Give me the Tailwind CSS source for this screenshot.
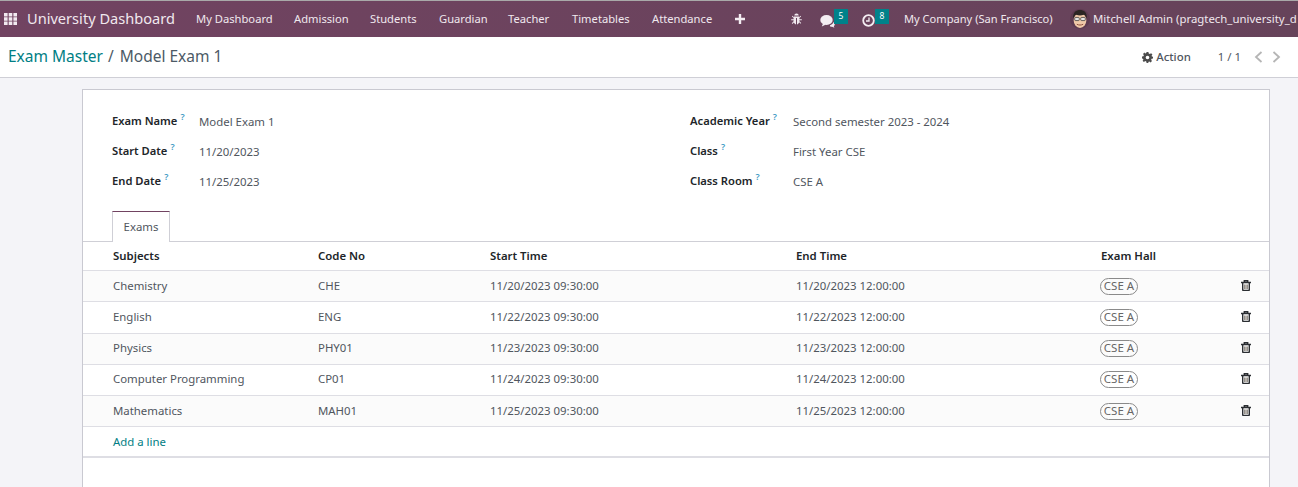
<!DOCTYPE html>
<html lang="en">
<head>
    <meta charset="UTF-8">
    <title>Exam Master / Model Exam 1</title>
    <script src="https://cdn.jsdelivr.net/npm/@tailwindcss/browser@4"></script>
</head>
<body class="h-[487px] overflow-hidden bg-[#f4f4f8] font-['Noto_Sans','Open_Sans',sans-serif] text-[11.4px] text-[#50565e]">
    <!-- Top nav -->
    <div class="h-[1px] bg-[#a9a9a9]"></div>
    <nav class="flex h-[36px] items-center overflow-hidden whitespace-nowrap bg-gradient-to-r from-[#714361] to-[#66435a] text-[11.2px] text-[#f0e8ee]">
        <svg class="ml-[4px] h-[12px] w-[13px] shrink-0 fill-[#f2eaf0]" viewBox="0 0 13 12">
            <path d="M0 0h3.6v3.4H0zM4.7 0h3.6v3.4H4.7zM9.4 0H13v3.4H9.4zM0 4.3h3.6v3.4H0zM4.7 4.3h3.6v3.4H4.7zM9.4 4.3H13v3.4H9.4zM0 8.6h3.6V12H0zM4.7 8.6h3.6V12H4.7zM9.4 8.6H13V12H9.4z"/>
        </svg>
        <span class="ml-[10px] w-[147px] text-[14.6px]">University Dashboard</span>
        <span class="ml-[22px] w-[76px]">My Dashboard</span>
        <span class="ml-[22px] w-[55px]">Admission</span>
        <span class="ml-[21px] w-[48px]">Students</span>
        <span class="ml-[21px] w-[48px]">Guardian</span>
        <span class="ml-[21px] w-[42px]">Teacher</span>
        <span class="ml-[22px] w-[59px]">Timetables</span>
        <span class="ml-[21px] w-[62px]">Attendance</span>
        <svg class="ml-[21px] h-[10px] w-[10px] shrink-0 fill-[#f4edf2]" viewBox="0 0 10 10"><path d="M3.8 0h2.4v3.8H10v2.4H6.2V10H3.8V6.2H0V3.8h3.8z"/></svg>

        <!-- bug -->
        <svg class="ml-[46px] h-[12px] w-[11px] shrink-0 fill-[#f0e8ee]" viewBox="0 0 11 12">
            <path d="M3.3 2.6a2.2 2.2 0 0 1 4.4 0zM3 3.4h5v.8l1.5-1.4.6.6L8.4 5v1.3h2.4v1H8.4v1l1.8 1.8-.6.6-1.4-1.4C7.6 10.600 6.800 11.400 6 11.500V5H5v6.500c-.8-.1-1.600-.9-2.200-2L1.400 10.900l-.6-.6L2.600 8.300v-1H.2v-1h2.400V5L.9 3.400l.6-.6L3 4.200z"/>
        </svg>
        <!-- comments + badge -->
        <div class="relative ml-[18px] h-[14px] w-[14px] shrink-0 translate-y-[2px]">
            <svg class="h-[14px] w-[15px] fill-[#f4edf2]" viewBox="0 0 15 14">
                <ellipse cx="6.500" cy="6" rx="6.200" ry="5"/>
                <path d="M3 9.500 1.800 12.500 6 10.500z"/>
                <path d="M10 11.200c1.500-.3 3-1.600 3.500-3.200.8.700 1.300 1.500 1.300 2.300 0 .9-.5 1.500-1 2l.6 1.500-2.300-1c-.9 0-1.600-.2-2.100-.6z"/>
            </svg>
            <span class="absolute left-[14px] top-[-5px] flex h-[15px] w-[14px] items-center justify-center bg-[#00828a] text-[8.500px] text-white">5</span>
        </div>
        <!-- clock + badge -->
        <div class="relative ml-[28px] h-[13px] w-[13px] shrink-0 translate-y-[1px]">
            <svg class="h-[13px] w-[13px]" viewBox="0 0 13 13" fill="none" stroke="#f4edf2">
                <circle cx="6.500" cy="6.500" r="5.300" stroke-width="1.800"/>
                <path d="M7 3.500v3.500H4" stroke-width="1.300"/>
            </svg>
            <span class="absolute left-[13px] top-[-5px] flex h-[15px] w-[14px] items-center justify-center bg-[#00828a] text-[8.500px] text-white">8</span>
        </div>
        <span class="ml-[29px] w-[148px] text-[11.100px]">My Company (San Francisco)</span>
        <!-- avatar -->
        <svg class="ml-[18px] h-[20px] w-[20px] shrink-0" viewBox="0 0 19 19">
            <circle cx="9.500" cy="9.500" r="9.500" fill="#5d3a50"/>
            <ellipse cx="9.500" cy="11" rx="6" ry="7" fill="#f0c9a8"/>
            <path d="M3 9C2.500 3 6 1 9.500 1S16.500 3 16 9c-1-2-2-3.500-3-3.500-2 .8-5 .8-7 0C5 5.500 4 7 3 9z" fill="#2b2523"/>
            <rect x="4.500" y="8" width="4.300" height="3" rx=".8" fill="#e6e6e6" stroke="#333" stroke-width=".7"/>
            <rect x="10.200" y="8" width="4.300" height="3" rx=".8" fill="#e6e6e6" stroke="#333" stroke-width=".7"/>
            <path d="M6.500 14.500c2 1 4 1 6 0" stroke="#8a4a3a" stroke-width=".9" fill="none"/>
        </svg>
        <span class="ml-[3px] text-[11.400px]">Mitchell Admin (pragtech_university_d</span>
    </nav>

    <!-- Breadcrumb bar -->
    <div class="flex h-[41px] items-center border-b border-[#cfcfd6] bg-white">
        <span class="ml-[8px] text-[15.500px] text-[#017e84]">Exam Master</span>
        <span class="ml-[5px] text-[15.500px] text-[#4c5a66]">/</span>
        <span class="ml-[6px] text-[15.500px] text-[#4c5a66]">Model Exam 1</span>
        <svg class="ml-auto h-[11px] w-[11px] fill-[#4c4c4c]" viewBox="0 0 24 24">
            <path d="M10 0h4l.7 3.300 2.300 1 2.900-1.800 2.800 2.800-1.800 2.900 1 2.300L24 10v4l-3.100.7-1 2.300 1.800 2.900-2.800 2.800-2.900-1.800-2.300 1L14 24h-4l-.7-3.100-2.300-1-2.900 1.800-2.800-2.800L3.100 17l-1-2.300L0 14v-4l3.100-.7 1-2.300-1.800-2.900 2.800-2.800L7 3.100l2.300-1zM12 8a4 4 0 1 0 0 8 4 4 0 0 0 0-8z" fill-rule="evenodd"/>
        </svg>
        <span class="ml-[3px] font-medium">Action</span>
        <span class="ml-[27px]">1 / 1</span>
        <svg class="ml-[13px] h-[12px] w-[9px]" viewBox="0 0 9 12" fill="none" stroke="#b5b5b5" stroke-width="1.800"><path d="M7.500 1 2 6l5.500 5"/></svg>
        <svg class="ml-[9px] mr-[17px] h-[12px] w-[9px]" viewBox="0 0 9 12" fill="none" stroke="#b5b5b5" stroke-width="1.800"><path d="M1.500 1 7 6l-5.500 5"/></svg>
    </div>

    <!-- Form sheet -->
    <div class="mx-[82px] mt-[11px] h-[400px] w-[1188px] border border-[#c9c9d1] bg-white">
        <div class="grid grid-cols-[578px_1fr] pl-[29px] pt-[17px]">
            <div>
                <div class="flex h-[30px] items-center"><span class="w-[87px] -translate-y-px text-[11.200px] font-semibold text-[#212529]">Exam Name<sup class="ml-[3px] text-[9px] font-semibold text-[#3d9ac4]">?</sup></span><span>Model Exam 1</span></div>
                <div class="flex h-[30px] items-center"><span class="w-[87px] -translate-y-px text-[11.200px] font-semibold text-[#212529]">Start Date<sup class="ml-[3px] text-[9px] font-semibold text-[#3d9ac4]">?</sup></span><span>11/20/2023</span></div>
                <div class="flex h-[30px] items-center"><span class="w-[87px] -translate-y-px text-[11.200px] font-semibold text-[#212529]">End Date<sup class="ml-[3px] text-[9px] font-semibold text-[#3d9ac4]">?</sup></span><span>11/25/2023</span></div>
            </div>
            <div>
                <div class="flex h-[30px] items-center"><span class="w-[103px] -translate-y-px text-[11.200px] font-semibold text-[#212529]">Academic Year<sup class="ml-[3px] text-[9px] font-semibold text-[#3d9ac4]">?</sup></span><span>Second semester 2023 - 2024</span></div>
                <div class="flex h-[30px] items-center"><span class="w-[103px] -translate-y-px text-[11.200px] font-semibold text-[#212529]">Class<sup class="ml-[3px] text-[9px] font-semibold text-[#3d9ac4]">?</sup></span><span>First Year CSE</span></div>
                <div class="flex h-[30px] items-center"><span class="w-[103px] -translate-y-px text-[11.200px] font-semibold text-[#212529]">Class Room<sup class="ml-[3px] text-[9px] font-semibold text-[#3d9ac4]">?</sup></span><span>CSE A</span></div>
            </div>
        </div>

        <!-- Tab -->
        <div class="mt-[14px] h-[31px] border-b border-[#cfcfd6] pl-[29px]">
            <div class="flex h-[31px] w-[58px] items-center justify-center border border-b-0 border-[#cfcfd6] border-t-[#714361] bg-white">Exams</div>
        </div>

        <!-- Lines -->
        <div class="grid h-[28px] grid-cols-[205px_172px_306px_305px_140px_1fr] items-center pl-[30px] font-semibold text-[#212529]">
            <span>Subjects</span><span>Code No</span><span>Start Time</span><span>End Time</span><span>Exam Hall</span><span></span>
        </div>

        <div class="grid h-[31px] grid-cols-[205px_172px_306px_305px_140px_1fr] items-center border-t border-[#dedee4] bg-[#fbfbfb] pl-[30px]">
            <span>Chemistry</span><span>CHE</span><span>11/20/2023 09:30:00</span><span>11/20/2023 12:00:00</span>
            <span class="flex h-[17px] w-[38px] -translate-x-px items-center justify-center rounded-full border border-[#8a8a8a] text-[11.500px] text-[#666]">CSE A</span>
            <svg class="h-[11px] w-[10px] -translate-y-px" viewBox="0 0 10 11" fill="none" stroke="#2b2e32" stroke-width="1.400"><path d="M0 2.500h10M3.300 2.500V.8h3.400v1.700"/><path d="M1.700 2.500v7.300a.7.7 0 0 0 .7.7h5.200a.7.7 0 0 0 .7-.7V2.500"/><path d="M3.900 4.500v4.500M6.100 4.500v4.500" stroke="#5f574c" stroke-width="1.100"/></svg>
        </div>
        <div class="grid h-[32px] grid-cols-[205px_172px_306px_305px_140px_1fr] items-center border-t border-[#dedee4] pb-px pl-[30px]">
            <span>English</span><span>ENG</span><span>11/22/2023 09:30:00</span><span>11/22/2023 12:00:00</span>
            <span class="flex h-[17px] w-[38px] -translate-x-px items-center justify-center rounded-full border border-[#8a8a8a] text-[11.500px] text-[#666]">CSE A</span>
            <svg class="h-[11px] w-[10px] -translate-y-px" viewBox="0 0 10 11" fill="none" stroke="#2b2e32" stroke-width="1.400"><path d="M0 2.500h10M3.300 2.500V.8h3.400v1.700"/><path d="M1.700 2.500v7.300a.7.7 0 0 0 .7.7h5.200a.7.7 0 0 0 .7-.7V2.500"/><path d="M3.900 4.500v4.500M6.100 4.500v4.500" stroke="#5f574c" stroke-width="1.100"/></svg>
        </div>
        <div class="grid h-[31px] grid-cols-[205px_172px_306px_305px_140px_1fr] items-center border-t border-[#dedee4] bg-[#fbfbfb] pb-[2px] pl-[30px]">
            <span>Physics</span><span>PHY01</span><span>11/23/2023 09:30:00</span><span>11/23/2023 12:00:00</span>
            <span class="flex h-[17px] w-[38px] -translate-x-px items-center justify-center rounded-full border border-[#8a8a8a] text-[11.500px] text-[#666]">CSE A</span>
            <svg class="h-[11px] w-[10px] -translate-y-px" viewBox="0 0 10 11" fill="none" stroke="#2b2e32" stroke-width="1.400"><path d="M0 2.500h10M3.300 2.500V.8h3.400v1.700"/><path d="M1.700 2.500v7.300a.7.7 0 0 0 .7.7h5.200a.7.7 0 0 0 .7-.7V2.500"/><path d="M3.900 4.500v4.500M6.100 4.500v4.500" stroke="#5f574c" stroke-width="1.100"/></svg>
        </div>
        <div class="grid h-[31px] grid-cols-[205px_172px_306px_305px_140px_1fr] items-center border-t border-[#dedee4] pb-[2px] pl-[30px]">
            <span>Computer Programming</span><span>CP01</span><span>11/24/2023 09:30:00</span><span>11/24/2023 12:00:00</span>
            <span class="flex h-[17px] w-[38px] -translate-x-px items-center justify-center rounded-full border border-[#8a8a8a] text-[11.500px] text-[#666]">CSE A</span>
            <svg class="h-[11px] w-[10px] -translate-y-px" viewBox="0 0 10 11" fill="none" stroke="#2b2e32" stroke-width="1.400"><path d="M0 2.500h10M3.300 2.500V.8h3.400v1.700"/><path d="M1.700 2.500v7.300a.7.7 0 0 0 .7.7h5.200a.7.7 0 0 0 .7-.7V2.500"/><path d="M3.900 4.500v4.500M6.100 4.500v4.500" stroke="#5f574c" stroke-width="1.100"/></svg>
        </div>
        <div class="grid h-[31px] grid-cols-[205px_172px_306px_305px_140px_1fr] items-center border-t border-[#dedee4] bg-[#fbfbfb] pl-[30px]">
            <span>Mathematics</span><span>MAH01</span><span>11/25/2023 09:30:00</span><span>11/25/2023 12:00:00</span>
            <span class="flex h-[17px] w-[38px] -translate-x-px items-center justify-center rounded-full border border-[#8a8a8a] text-[11.500px] text-[#666]">CSE A</span>
            <svg class="h-[11px] w-[10px] -translate-y-px" viewBox="0 0 10 11" fill="none" stroke="#2b2e32" stroke-width="1.400"><path d="M0 2.500h10M3.300 2.500V.8h3.400v1.700"/><path d="M1.700 2.500v7.300a.7.7 0 0 0 .7.7h5.200a.7.7 0 0 0 .7-.7V2.500"/><path d="M3.900 4.500v4.500M6.100 4.500v4.500" stroke="#5f574c" stroke-width="1.100"/></svg>
        </div>
        <div class="flex h-[32px] items-center border-y border-b-2 border-[#dedee4] pl-[30px] text-[#017e84]">Add a line</div>
    </div>
</body>
</html>
